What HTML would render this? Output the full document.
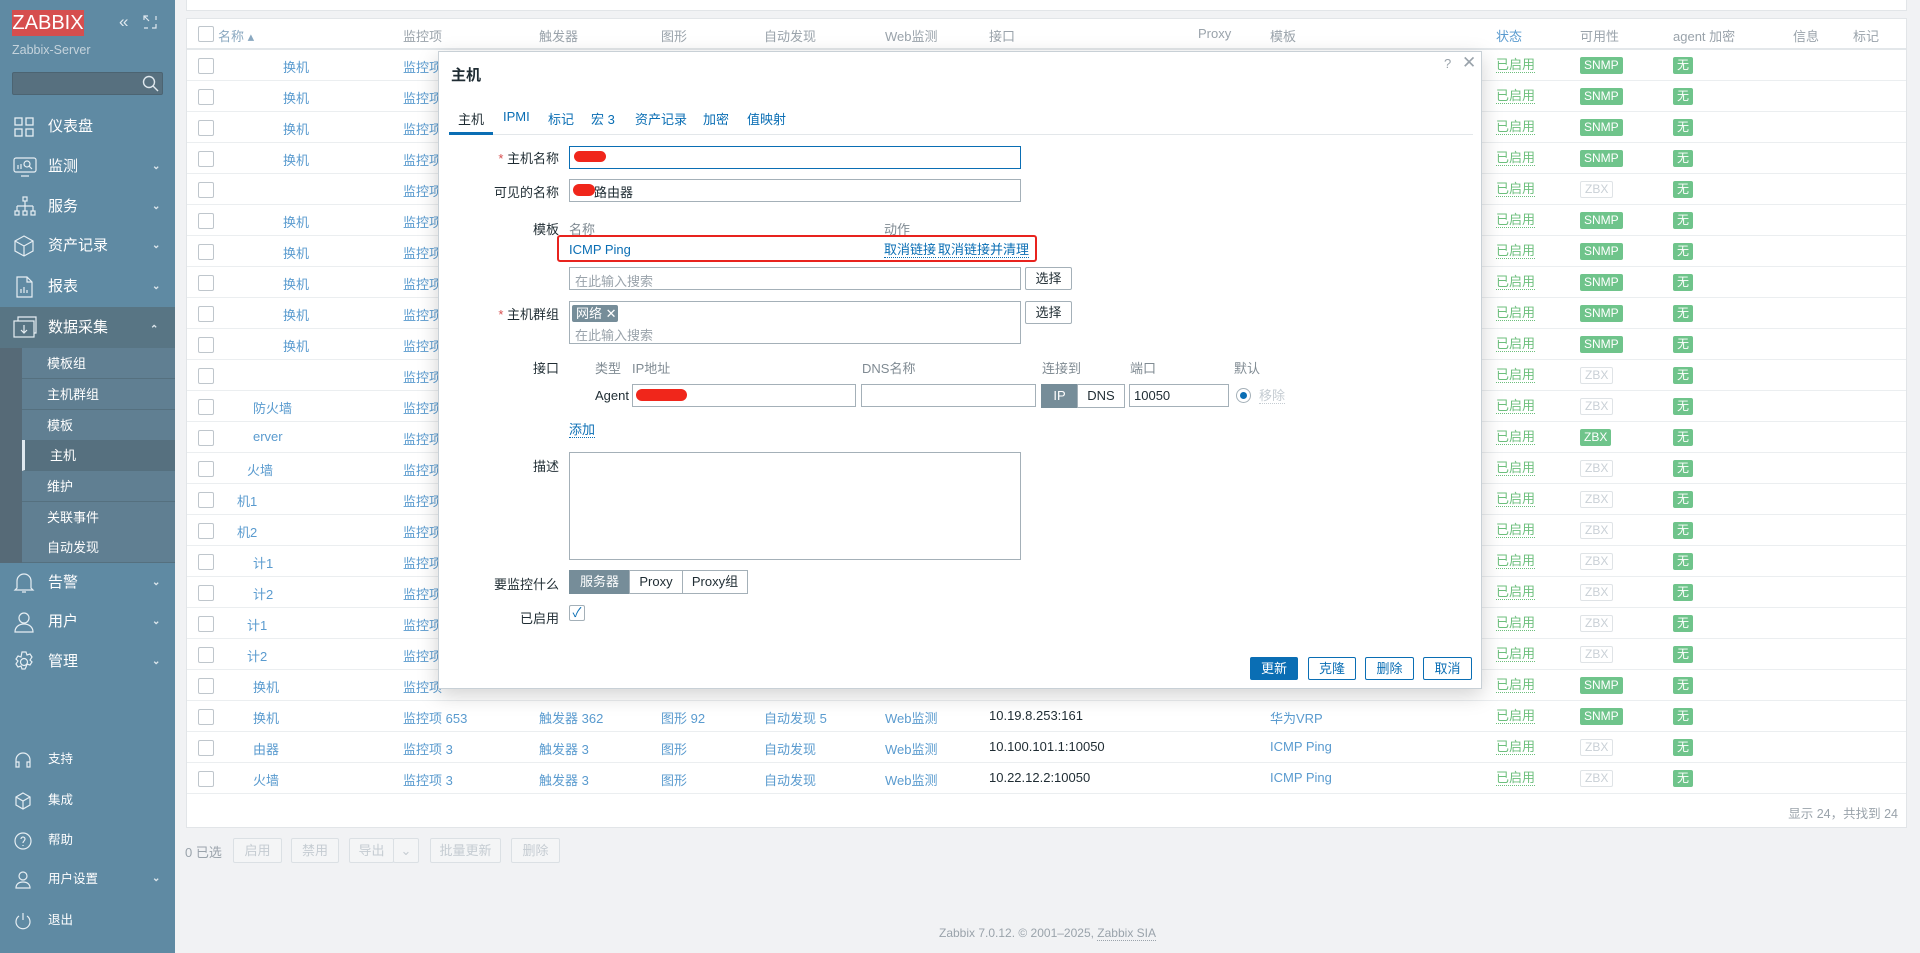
<!DOCTYPE html>
<html><head><meta charset="utf-8"><style>
*{box-sizing:border-box;margin:0;padding:0}
body{width:1920px;height:953px;overflow:hidden;background:#f1f2f4;font-family:"Liberation Sans","Noto Sans CJK SC",sans-serif;font-size:13px;color:#1f2c33;position:relative}
.a{position:absolute;white-space:nowrap}
#sb{position:absolute;left:0;top:0;width:175px;height:953px;background:#5f8aa3;color:#fff}
.mi{position:absolute;left:0;width:175px;height:40px;font-size:15px;line-height:40px}
.mi span{position:absolute;left:48px}
.mi svg{position:absolute;left:13px;top:9px}
.mi .ch{position:absolute;left:152px;top:0;font-size:10px;color:#dde6ec}
.sub{position:absolute;left:22px;width:153px;height:31px;line-height:31px;font-size:13px;padding-left:25px;border-bottom:1px solid #55707f;background:#607f92}
.bi{position:absolute;left:0;width:175px;height:30px;line-height:30px;font-size:12.5px}
.bi span{position:absolute;left:48px}
.bi svg{position:absolute;left:14px;top:7px}
.panel{position:absolute;background:#fff;border:1px solid #e2e5e8}
.row{position:absolute;left:187px;width:1719px;height:31px;border-bottom:1px solid #ebeef0}
.cb{position:absolute;left:11px;top:8px;width:16px;height:16px;border:1px solid #bfc6cc;background:#fff;border-radius:2px}
.lk{color:#5a9bcf}
.hd{color:#9aa3ab}
.row .a{top:7px}
.st{color:#6cbf7c;border-bottom:1px dotted #6cbf7c;line-height:13px}
.bg{display:inline-block;height:17px;line-height:17px;padding:0 4px;border-radius:2px;font-size:12px;color:#fff;background:#6fc48b}
.bz{background:#fff;color:#c9d0d6;border:1px solid #dfe3e6;line-height:15px}
#modal{position:absolute;left:438px;top:51px;width:1044px;height:638px;background:#fff;border:1px solid #c8d0d6;box-shadow:0 6px 20px rgba(0,0,0,.18);z-index:5}
#modal .a{font-size:13px}
.lbl{color:#1f2c33;text-align:right;width:120px}
.in{position:absolute;border:1px solid #a4b0b8;background:#fff;height:23px}
.btn{position:absolute;height:23px;line-height:21px;border:1px solid #0a6eb4;color:#0a6eb4;background:#fff;text-align:center;border-radius:2px;font-size:13px}
.fb{position:absolute;height:25px;line-height:23px;border:1px solid #dbe0e4;color:#c5ccd2;background:#f4f5f6;text-align:center;font-size:13px;top:838px;border-radius:2px}
.tg{position:absolute;top:0;height:24px;line-height:22px;border:1px solid #a4b0b8;text-align:center;font-size:13px;background:#fff}
</style></head><body>

<div id="sb">
 <div class="a" style="left:12px;top:10px;width:72px;height:26px;background:#d64e4e;color:#fff;font-size:20px;line-height:26px;text-align:center;overflow:hidden">ZABBIX</div>
 <div class="a" style="left:119px;top:12px;font-size:17px;color:#dfe8ee">&laquo;</div>
 <svg class="a" style="left:143px;top:15px" width="14" height="14" viewBox="0 0 14 14" fill="none" stroke="#dfe8ee" stroke-width="1.2"><path d="M1 5V1h4M13 9v4H9M1 1l5 5M1 13h4M13 1v4"/></svg>
 <div class="a" style="left:12px;top:43px;color:#c5d3dc;font-size:12.5px">Zabbix-Server</div>
 <div class="a" style="left:12px;top:72px;width:151px;height:23px;background:#57707f;border:1px solid #4c6472;border-radius:2px"></div>
 <svg class="a" style="left:142px;top:75px" width="17" height="17" viewBox="0 0 17 17" fill="none" stroke="#dfe8ee" stroke-width="1.4"><circle cx="7" cy="7" r="5.5"/><path d="M11 11l5 5"/></svg>

 <div class="mi" style="top:107px"><svg width="22" height="22" viewBox="0 0 22 22" fill="none" stroke="#e6eef3" stroke-width="1.3"><rect x="2" y="2" width="7" height="7"/><rect x="13" y="2" width="7" height="7"/><rect x="2" y="13" width="7" height="7"/><rect x="13" y="13" width="7" height="7"/></svg><span>仪表盘</span></div>
 <div class="mi" style="top:147px"><svg width="24" height="22" viewBox="0 0 24 22" fill="none" stroke="#e6eef3" stroke-width="1.2"><rect x="1" y="2" width="22" height="14" rx="2"/><path d="M8 20h8M5 13V9M8 13V8"/><circle cx="14" cy="8" r="3"/><path d="M16 10l3 3"/></svg><span>监测</span><b class="ch">⌄</b></div>
 <div class="mi" style="top:187px"><svg width="24" height="22" viewBox="0 0 24 22" fill="none" stroke="#e6eef3" stroke-width="1.2"><rect x="10" y="1" width="4" height="4"/><path d="M12 5v5M4 10h16M4 10v5M12 10v5M20 10v5"/><rect x="2" y="15" width="4" height="4"/><rect x="10" y="15" width="4" height="4"/><rect x="18" y="15" width="4" height="4"/></svg><span>服务</span><b class="ch">⌄</b></div>
 <div class="mi" style="top:226px"><svg width="22" height="22" viewBox="0 0 22 22" fill="none" stroke="#e6eef3" stroke-width="1.2"><path d="M11 1l9 5v10l-9 5-9-5V6zM2 6l9 5 9-5M11 11v10"/></svg><span>资产记录</span><b class="ch">⌄</b></div>
 <div class="mi" style="top:267px"><svg width="22" height="22" viewBox="0 0 22 22" fill="none" stroke="#e6eef3" stroke-width="1.2"><path d="M4 1h10l5 5v15H4zM14 1v5h5M8 17v-4M11 17v-6M14 17v-3"/></svg><span>报表</span><b class="ch">⌄</b></div>
 <div class="mi" style="top:307px;background:#587584;height:41px;line-height:41px"><svg width="24" height="22" viewBox="0 0 24 22" fill="none" stroke="#e6eef3" stroke-width="1.2"><rect x="1" y="5" width="20" height="16"/><path d="M5 5V1h18v16h-2M11 9v8M8 14l3 3 3-3"/></svg><span>数据采集</span><b class="ch" style="transform:rotate(180deg);left:150px">⌄</b></div>
 <div class="a" style="left:0;top:348px;width:22px;height:215px;background:#566a77"></div>
 <div class="sub" style="top:348px">模板组</div>
 <div class="sub" style="top:379px">主机群组</div>
 <div class="sub" style="top:410px">模板</div>
 <div class="sub" style="top:440px;background:#56707f;border-left:3px solid #dfe8ee">主机</div>
 <div class="sub" style="top:471px">维护</div>
 <div class="sub" style="top:502px">关联事件</div>
 <div class="sub" style="top:532px">自动发现</div>
 <div class="mi" style="top:563px"><svg width="22" height="22" viewBox="0 0 22 22" fill="none" stroke="#e6eef3" stroke-width="1.2"><path d="M4 16V9a7 7 0 0114 0v7l2 2H2zM9 20h4"/></svg><span>告警</span><b class="ch">⌄</b></div>
 <div class="mi" style="top:602px"><svg width="22" height="22" viewBox="0 0 22 22" fill="none" stroke="#e6eef3" stroke-width="1.2"><circle cx="11" cy="7" r="5"/><path d="M2 21c0-5 4-8 9-8s9 3 9 8z"/></svg><span>用户</span><b class="ch">⌄</b></div>
 <div class="mi" style="top:642px"><svg width="22" height="22" viewBox="0 0 22 22" fill="none" stroke="#e6eef3" stroke-width="1.2"><circle cx="11" cy="11" r="3.5"/><path d="M9 1h4l1 3 3-1 2 3-2 3 2 2-2 3-3-1-1 3-1 2H9l-1-3-3 1-2-3 2-3-2-2 2-3 3 1z"/></svg><span>管理</span><b class="ch">⌄</b></div>

 <div class="bi" style="top:744px"><svg width="18" height="18" viewBox="0 0 18 18" fill="none" stroke="#e6eef3" stroke-width="1.2"><path d="M2 11V9a7 7 0 0114 0v2M2 11h3v5H2zM13 11h3v5h-3z"/></svg><span>支持</span></div>
 <div class="bi" style="top:785px"><svg width="18" height="18" viewBox="0 0 18 18" fill="none" stroke="#e6eef3" stroke-width="1.2"><path d="M9 1l7 4v8l-7 4-7-4V5zM2 5l7 4 7-4M9 9v8"/></svg><span>集成</span></div>
 <div class="bi" style="top:825px"><svg width="18" height="18" viewBox="0 0 18 18" fill="none" stroke="#e6eef3" stroke-width="1.2"><circle cx="9" cy="9" r="8"/><path d="M7 7a2 2 0 114 0c0 2-2 2-2 4M9 13v1"/></svg><span>帮助</span></div>
 <div class="bi" style="top:864px"><svg width="18" height="18" viewBox="0 0 18 18" fill="none" stroke="#e6eef3" stroke-width="1.2"><circle cx="9" cy="5" r="4"/><path d="M2 17c0-4 3-6 7-6s7 2 7 6z"/></svg><span>用户设置</span><b style="position:absolute;left:152px;font-size:10px;color:#dde6ec">⌄</b></div>
 <div class="bi" style="top:905px"><svg width="18" height="18" viewBox="0 0 18 18" fill="none" stroke="#e6eef3" stroke-width="1.2"><path d="M9 1v7M5 4a7 7 0 108 0"/></svg><span>退出</span></div>
</div>

<div class="panel" style="left:186px;top:0;width:1721px;height:11px;border-top:none"></div>
<div class="panel" style="left:186px;top:18px;width:1721px;height:810px"></div>

<!-- header -->
<div class="row" style="top:19px;height:31px;border-bottom:2px solid #e3e7ea">
 <div class="cb" style="top:7px"></div>
 <div class="a hd" style="left:31px;color:#8aa8c0;top:7px">名称 ▴</div>
 <div class="a hd" style="left:216px;top:7px">监控项</div><div class="a hd" style="left:352px;top:7px">触发器</div><div class="a hd" style="left:474px;top:7px">图形</div><div class="a hd" style="left:577px;top:7px">自动发现</div><div class="a hd" style="left:698px;top:7px">Web监测</div><div class="a hd" style="left:802px;top:7px">接口</div><div class="a hd" style="left:1011px;top:7px">Proxy</div><div class="a hd" style="left:1083px;top:7px">模板</div><div class="a hd" style="left:1309px;color:#5a9bcf;top:7px">状态</div><div class="a hd" style="left:1393px;top:7px">可用性</div><div class="a hd" style="left:1486px;top:7px">agent 加密</div><div class="a hd" style="left:1606px;top:7px">信息</div><div class="a hd" style="left:1666px;top:7px">标记</div>
</div>

<div class="row" style="top:50px"><div class="cb"></div><div class="a lk" style="left:96px">换机</div><div class="a lk" style="left:216px">监控项</div><div class="a" style="left:1309px"><span class="st">已启用</span></div><div class="a" style="left:1393px;top:7px"><span class="bg">SNMP</span></div><div class="a" style="left:1486px;top:7px"><span class="bg">无</span></div></div>
<div class="row" style="top:81px"><div class="cb"></div><div class="a lk" style="left:96px">换机</div><div class="a lk" style="left:216px">监控项</div><div class="a" style="left:1309px"><span class="st">已启用</span></div><div class="a" style="left:1393px;top:7px"><span class="bg">SNMP</span></div><div class="a" style="left:1486px;top:7px"><span class="bg">无</span></div></div>
<div class="row" style="top:112px"><div class="cb"></div><div class="a lk" style="left:96px">换机</div><div class="a lk" style="left:216px">监控项</div><div class="a" style="left:1309px"><span class="st">已启用</span></div><div class="a" style="left:1393px;top:7px"><span class="bg">SNMP</span></div><div class="a" style="left:1486px;top:7px"><span class="bg">无</span></div></div>
<div class="row" style="top:143px"><div class="cb"></div><div class="a lk" style="left:96px">换机</div><div class="a lk" style="left:216px">监控项</div><div class="a" style="left:1309px"><span class="st">已启用</span></div><div class="a" style="left:1393px;top:7px"><span class="bg">SNMP</span></div><div class="a" style="left:1486px;top:7px"><span class="bg">无</span></div></div>
<div class="row" style="top:174px"><div class="cb"></div><div class="a lk" style="left:216px">监控项</div><div class="a" style="left:1309px"><span class="st">已启用</span></div><div class="a" style="left:1393px;top:7px"><span class="bg bz">ZBX</span></div><div class="a" style="left:1486px;top:7px"><span class="bg">无</span></div></div>
<div class="row" style="top:205px"><div class="cb"></div><div class="a lk" style="left:96px">换机</div><div class="a lk" style="left:216px">监控项</div><div class="a" style="left:1309px"><span class="st">已启用</span></div><div class="a" style="left:1393px;top:7px"><span class="bg">SNMP</span></div><div class="a" style="left:1486px;top:7px"><span class="bg">无</span></div></div>
<div class="row" style="top:236px"><div class="cb"></div><div class="a lk" style="left:96px">换机</div><div class="a lk" style="left:216px">监控项</div><div class="a" style="left:1309px"><span class="st">已启用</span></div><div class="a" style="left:1393px;top:7px"><span class="bg">SNMP</span></div><div class="a" style="left:1486px;top:7px"><span class="bg">无</span></div></div>
<div class="row" style="top:267px"><div class="cb"></div><div class="a lk" style="left:96px">换机</div><div class="a lk" style="left:216px">监控项</div><div class="a" style="left:1309px"><span class="st">已启用</span></div><div class="a" style="left:1393px;top:7px"><span class="bg">SNMP</span></div><div class="a" style="left:1486px;top:7px"><span class="bg">无</span></div></div>
<div class="row" style="top:298px"><div class="cb"></div><div class="a lk" style="left:96px">换机</div><div class="a lk" style="left:216px">监控项</div><div class="a" style="left:1309px"><span class="st">已启用</span></div><div class="a" style="left:1393px;top:7px"><span class="bg">SNMP</span></div><div class="a" style="left:1486px;top:7px"><span class="bg">无</span></div></div>
<div class="row" style="top:329px"><div class="cb"></div><div class="a lk" style="left:96px">换机</div><div class="a lk" style="left:216px">监控项</div><div class="a" style="left:1309px"><span class="st">已启用</span></div><div class="a" style="left:1393px;top:7px"><span class="bg">SNMP</span></div><div class="a" style="left:1486px;top:7px"><span class="bg">无</span></div></div>
<div class="row" style="top:360px"><div class="cb"></div><div class="a lk" style="left:216px">监控项</div><div class="a" style="left:1309px"><span class="st">已启用</span></div><div class="a" style="left:1393px;top:7px"><span class="bg bz">ZBX</span></div><div class="a" style="left:1486px;top:7px"><span class="bg">无</span></div></div>
<div class="row" style="top:391px"><div class="cb"></div><div class="a lk" style="left:66px">防火墙</div><div class="a lk" style="left:216px">监控项</div><div class="a" style="left:1309px"><span class="st">已启用</span></div><div class="a" style="left:1393px;top:7px"><span class="bg bz">ZBX</span></div><div class="a" style="left:1486px;top:7px"><span class="bg">无</span></div></div>
<div class="row" style="top:422px"><div class="cb"></div><div class="a lk" style="left:66px">erver</div><div class="a lk" style="left:216px">监控项</div><div class="a" style="left:1309px"><span class="st">已启用</span></div><div class="a" style="left:1393px;top:7px"><span class="bg">ZBX</span></div><div class="a" style="left:1486px;top:7px"><span class="bg">无</span></div></div>
<div class="row" style="top:453px"><div class="cb"></div><div class="a lk" style="left:60px">火墙</div><div class="a lk" style="left:216px">监控项</div><div class="a" style="left:1309px"><span class="st">已启用</span></div><div class="a" style="left:1393px;top:7px"><span class="bg bz">ZBX</span></div><div class="a" style="left:1486px;top:7px"><span class="bg">无</span></div></div>
<div class="row" style="top:484px"><div class="cb"></div><div class="a lk" style="left:50px">机1</div><div class="a lk" style="left:216px">监控项</div><div class="a" style="left:1309px"><span class="st">已启用</span></div><div class="a" style="left:1393px;top:7px"><span class="bg bz">ZBX</span></div><div class="a" style="left:1486px;top:7px"><span class="bg">无</span></div></div>
<div class="row" style="top:515px"><div class="cb"></div><div class="a lk" style="left:50px">机2</div><div class="a lk" style="left:216px">监控项</div><div class="a" style="left:1309px"><span class="st">已启用</span></div><div class="a" style="left:1393px;top:7px"><span class="bg bz">ZBX</span></div><div class="a" style="left:1486px;top:7px"><span class="bg">无</span></div></div>
<div class="row" style="top:546px"><div class="cb"></div><div class="a lk" style="left:66px">计1</div><div class="a lk" style="left:216px">监控项</div><div class="a" style="left:1309px"><span class="st">已启用</span></div><div class="a" style="left:1393px;top:7px"><span class="bg bz">ZBX</span></div><div class="a" style="left:1486px;top:7px"><span class="bg">无</span></div></div>
<div class="row" style="top:577px"><div class="cb"></div><div class="a lk" style="left:66px">计2</div><div class="a lk" style="left:216px">监控项</div><div class="a" style="left:1309px"><span class="st">已启用</span></div><div class="a" style="left:1393px;top:7px"><span class="bg bz">ZBX</span></div><div class="a" style="left:1486px;top:7px"><span class="bg">无</span></div></div>
<div class="row" style="top:608px"><div class="cb"></div><div class="a lk" style="left:60px">计1</div><div class="a lk" style="left:216px">监控项</div><div class="a" style="left:1309px"><span class="st">已启用</span></div><div class="a" style="left:1393px;top:7px"><span class="bg bz">ZBX</span></div><div class="a" style="left:1486px;top:7px"><span class="bg">无</span></div></div>
<div class="row" style="top:639px"><div class="cb"></div><div class="a lk" style="left:60px">计2</div><div class="a lk" style="left:216px">监控项</div><div class="a" style="left:1309px"><span class="st">已启用</span></div><div class="a" style="left:1393px;top:7px"><span class="bg bz">ZBX</span></div><div class="a" style="left:1486px;top:7px"><span class="bg">无</span></div></div>
<div class="row" style="top:670px"><div class="cb"></div><div class="a lk" style="left:66px">换机</div><div class="a lk" style="left:216px">监控项</div><div class="a" style="left:1309px"><span class="st">已启用</span></div><div class="a" style="left:1393px;top:7px"><span class="bg">SNMP</span></div><div class="a" style="left:1486px;top:7px"><span class="bg">无</span></div></div>
<div class="row" style="top:701px"><div class="cb"></div><div class="a lk" style="left:66px">换机</div><div class="a lk" style="left:216px">监控项 653</div><div class="a lk" style="left:352px">触发器 362</div><div class="a lk" style="left:474px">图形 92</div><div class="a lk" style="left:577px">自动发现 5</div><div class="a lk" style="left:698px">Web监测</div><div class="a" style="left:802px">10.19.8.253:161</div><div class="a lk" style="left:1083px">华为VRP</div><div class="a" style="left:1309px"><span class="st">已启用</span></div><div class="a" style="left:1393px;top:7px"><span class="bg">SNMP</span></div><div class="a" style="left:1486px;top:7px"><span class="bg">无</span></div></div>
<div class="row" style="top:732px"><div class="cb"></div><div class="a lk" style="left:66px">由器</div><div class="a lk" style="left:216px">监控项 3</div><div class="a lk" style="left:352px">触发器 3</div><div class="a lk" style="left:474px">图形</div><div class="a lk" style="left:577px">自动发现</div><div class="a lk" style="left:698px">Web监测</div><div class="a" style="left:802px">10.100.101.1:10050</div><div class="a lk" style="left:1083px">ICMP Ping</div><div class="a" style="left:1309px"><span class="st">已启用</span></div><div class="a" style="left:1393px;top:7px"><span class="bg bz">ZBX</span></div><div class="a" style="left:1486px;top:7px"><span class="bg">无</span></div></div>
<div class="row" style="top:763px"><div class="cb"></div><div class="a lk" style="left:66px">火墙</div><div class="a lk" style="left:216px">监控项 3</div><div class="a lk" style="left:352px">触发器 3</div><div class="a lk" style="left:474px">图形</div><div class="a lk" style="left:577px">自动发现</div><div class="a lk" style="left:698px">Web监测</div><div class="a" style="left:802px">10.22.12.2:10050</div><div class="a lk" style="left:1083px">ICMP Ping</div><div class="a" style="left:1309px"><span class="st">已启用</span></div><div class="a" style="left:1393px;top:7px"><span class="bg bz">ZBX</span></div><div class="a" style="left:1486px;top:7px"><span class="bg">无</span></div></div>

<div class="a" style="right:22px;top:803px;color:#9aa3ab;font-size:12.5px">显示 24，共找到 24</div>

<div class="a" style="left:185px;top:842px;color:#9aa3ab">0 已选</div>
<div class="fb" style="left:233px;width:49px">启用</div>
<div class="fb" style="left:291px;width:48px">禁用</div>
<div class="fb" style="left:349px;width:45px">导出</div><div class="fb" style="left:393px;width:26px">⌄</div>
<div class="fb" style="left:430px;width:71px">批量更新</div>
<div class="fb" style="left:511px;width:49px">删除</div>

<div class="a" style="left:0;width:1920px;top:926px;text-align:center;padding-left:175px;color:#9aa3ab;font-size:12px">Zabbix 7.0.12. © 2001–2025, <span style="border-bottom:1px dotted #9aa3ab">Zabbix SIA</span></div>

<!-- modal -->
<div id="modal">
 <div class="a" style="left:12px;top:12px;font-size:15px;font-weight:bold">主机</div>
 <div class="a" style="left:1005px;top:4px;color:#9aa3ab;font-size:13px">?</div>
 <div class="a" style="left:1023px;top:1px;color:#9aa3ab;font-size:17px">✕</div>
 <div class="a" style="left:10px;top:82px;width:1024px;height:1px;background:#e3e7ea"></div>
 <div class="a" style="left:10px;top:80px;width:44px;height:3px;background:#0a6eb4"></div>
 <div class="a" style="left:19px;top:57px">主机</div>
 <div class="a" style="left:64px;top:57px;color:#0a6eb4">IPMI</div>
 <div class="a" style="left:109px;top:57px;color:#0a6eb4">标记</div>
 <div class="a" style="left:152px;top:57px;color:#0a6eb4">宏 3</div>
 <div class="a" style="left:196px;top:57px;color:#0a6eb4">资产记录</div>
 <div class="a" style="left:264px;top:57px;color:#0a6eb4">加密</div>
 <div class="a" style="left:308px;top:57px;color:#0a6eb4">值映射</div>

 <div class="a lbl" style="left:0;top:96px"><span style="color:#d64e4e">* </span>主机名称</div>
 <div class="in" style="left:130px;top:94px;width:452px;border-color:#0a6eb4"></div>
 <div class="a" style="left:135px;top:99px;width:32px;height:11px;background:#f0261b;border-radius:6px"></div>
 <div class="a lbl" style="left:0;top:130px">可见的名称</div>
 <div class="in" style="left:130px;top:127px;width:452px"></div>
 <div class="a" style="left:134px;top:132px;width:22px;height:12px;background:#f0261b;border-radius:6px"></div>
 <div class="a" style="left:155px;top:130px">路由器</div>

 <div class="a lbl" style="left:0;top:167px">模板</div>
 <div class="a" style="left:130px;top:167px;color:#808b93">名称</div>
 <div class="a" style="left:445px;top:167px;color:#808b93">动作</div>
 <div class="a" style="left:118px;top:183px;width:480px;height:27px;border:2px solid #e8231e;border-radius:3px"></div>
 <div class="a" style="left:130px;top:190px;color:#0a6eb4">ICMP Ping</div>
 <div class="a" style="left:445px;top:190px;color:#0a6eb4;border-bottom:1px dotted #0a6eb4;line-height:15px">取消链接</div>
 <div class="a" style="left:499px;top:190px;color:#0a6eb4;border-bottom:1px dotted #0a6eb4;line-height:15px">取消链接并清理</div>
 <div class="in" style="left:130px;top:215px;width:452px"></div>
 <div class="a" style="left:136px;top:219px;color:#9aa3ab">在此输入搜索</div>
 <div class="btn" style="left:586px;top:215px;width:47px;color:#1f2c33;border-color:#a4b0b8">选择</div>

 <div class="a lbl" style="left:0;top:252px"><span style="color:#d64e4e">* </span>主机群组</div>
 <div class="in" style="left:130px;top:249px;width:452px;height:43px"></div>
 <div class="a" style="left:133px;top:253px;width:46px;height:17px;background:#768d99;color:#fff;line-height:17px;padding-left:4px;border-radius:2px">网络 ✕</div>
 <div class="a" style="left:136px;top:273px;color:#9aa3ab">在此输入搜索</div>
 <div class="btn" style="left:586px;top:249px;width:47px;color:#1f2c33;border-color:#a4b0b8">选择</div>

 <div class="a lbl" style="left:0;top:306px">接口</div>
 <div class="a" style="left:156px;top:306px;color:#808b93">类型</div>
 <div class="a" style="left:193px;top:306px;color:#808b93">IP地址</div>
 <div class="a" style="left:423px;top:306px;color:#808b93">DNS名称</div>
 <div class="a" style="left:603px;top:306px;color:#808b93">连接到</div>
 <div class="a" style="left:691px;top:306px;color:#808b93">端口</div>
 <div class="a" style="left:795px;top:306px;color:#808b93">默认</div>
 <div class="a" style="left:156px;top:336px">Agent</div>
 <div class="in" style="left:193px;top:332px;width:224px"></div>
 <div class="a" style="left:197px;top:337px;width:51px;height:12px;background:#f0261b;border-radius:6px"></div>
 <div class="in" style="left:422px;top:332px;width:175px"></div>
 <div class="a" style="left:602px;top:332px;width:84px;height:24px">
  <div class="tg" style="left:0;width:37px;background:#768d99;color:#fff;border-color:#768d99">IP</div>
  <div class="tg" style="left:36px;width:48px">DNS</div>
 </div>
 <div class="in" style="left:690px;top:332px;width:100px"></div>
 <div class="a" style="left:695px;top:336px">10050</div>
 <div class="a" style="left:797px;top:336px;width:15px;height:15px;border:1px solid #a4b0b8;border-radius:50%"></div>
 <div class="a" style="left:801px;top:340px;width:7px;height:7px;background:#0a6eb4;border-radius:50%"></div>
 <div class="a" style="left:820px;top:336px;color:#c5ccd2;border-bottom:1px dotted #c5ccd2;line-height:15px">移除</div>
 <div class="a" style="left:130px;top:370px;color:#0a6eb4;border-bottom:1px dotted #0a6eb4;line-height:15px">添加</div>

 <div class="a lbl" style="left:0;top:404px">描述</div>
 <div class="in" style="left:130px;top:400px;height:108px;width:452px"></div>

 <div class="a lbl" style="left:0;top:522px">要监控什么</div>
 <div class="a" style="left:130px;top:518px;width:180px;height:24px">
  <div class="tg" style="left:0;width:61px;background:#768d99;color:#fff;border-color:#768d99">服务器</div>
  <div class="tg" style="left:60px;width:54px">Proxy</div>
  <div class="tg" style="left:113px;width:66px">Proxy组</div>
 </div>
 <div class="a lbl" style="left:0;top:556px">已启用</div>
 <div class="a" style="left:130px;top:553px;width:16px;height:16px;border:1px solid #a4b0b8;border-radius:2px;color:#0a6eb4;font-size:13px;line-height:14px;text-align:center">✓</div>

 <div class="btn" style="left:811px;top:605px;width:48px;background:#0a6eb4;color:#fff">更新</div>
 <div class="btn" style="left:869px;top:605px;width:48px">克隆</div>
 <div class="btn" style="left:926px;top:605px;width:49px">删除</div>
 <div class="btn" style="left:984px;top:605px;width:49px">取消</div>
</div>
</body></html>
